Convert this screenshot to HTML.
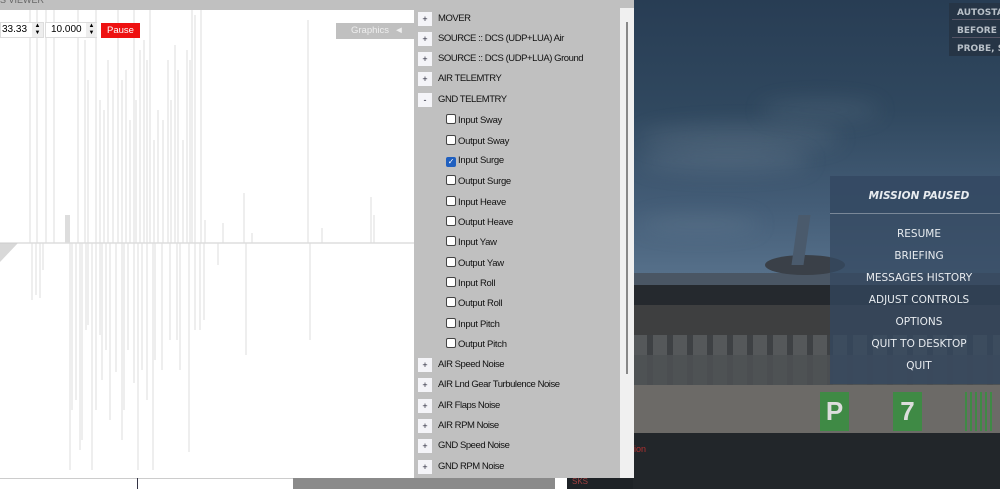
<!DOCTYPE html>
<html><head><meta charset="utf-8"><style>
*{margin:0;padding:0;box-sizing:border-box}
body{width:1000px;height:489px;overflow:hidden;position:relative;background:#1e2226;font-family:"Liberation Sans",sans-serif;}
.a{position:absolute}
.row{position:absolute;left:418px;font-size:9.5px;color:#111;height:14px;line-height:14px;letter-spacing:-0.45px}
.row .p{display:inline-block;width:14px;height:14px;background:#f4f4f8;color:#223;text-align:center;font-size:9px;margin-right:6px;vertical-align:top;letter-spacing:0}
.cb{position:absolute;left:446px;font-size:9.5px;color:#111;line-height:12px;letter-spacing:-0.3px}
.cb i{display:inline-block;width:10px;height:10px;border:1px solid #444;border-radius:2px;background:#fff;vertical-align:-1px;margin-right:2px}
.m{position:absolute;left:830px;width:178px;text-align:center;color:#e8ecf0;font-family:"DejaVu Sans",sans-serif;font-size:10.5px}
</style></head><body>
<!-- game area -->
<div class="a" style="left:633px;top:0;width:367px;height:275px;background:linear-gradient(180deg,#283d54 0%,#30485f 40%,#445d77 75%,#56708a 100%)"></div>
<div class="a" style="left:640px;top:125px;width:200px;height:26px;background:rgba(150,165,180,.18);filter:blur(10px);border-radius:50%"></div>
<div class="a" style="left:640px;top:150px;width:170px;height:22px;background:rgba(150,165,180,.2);filter:blur(10px);border-radius:50%"></div>
<div class="a" style="left:760px;top:100px;width:120px;height:20px;background:rgba(150,165,180,.15);filter:blur(10px);border-radius:50%"></div>
<div class="a" style="left:640px;top:215px;width:120px;height:18px;background:rgba(150,165,180,.15);filter:blur(10px);border-radius:50%"></div>
<div class="a" style="left:633px;top:273px;width:367px;height:12px;background:#4a5664"></div>
<div class="a" style="left:633px;top:285px;width:367px;height:20px;background:#25292e"></div>
<div class="a" style="left:633px;top:305px;width:367px;height:30px;background:#3e3f40"></div>
<div class="a" style="left:633px;top:335px;width:367px;height:50px;background:repeating-linear-gradient(90deg,#55585a 0 14px,#3e4144 14px 20px)"></div>
<div class="a" style="left:633px;top:355px;width:367px;height:30px;background:#4e5154;opacity:.85"></div>
<div class="a" style="left:633px;top:385px;width:367px;height:48px;background:#6c6a67"></div>
<div class="a" style="left:820px;top:392px;width:29px;height:39px;background:#3f8a45;color:#ddd;font:bold 26px 'Liberation Sans';text-align:center;line-height:39px">P</div>
<div class="a" style="left:893px;top:392px;width:29px;height:39px;background:#3f8a45;color:#ddd;font:bold 26px 'Liberation Sans';text-align:center;line-height:39px">7</div>
<div class="a" style="left:965px;top:392px;width:30px;height:39px;background:repeating-linear-gradient(90deg,#3f8a45 0 2px,#6c6a67 2px 5px)"></div>
<div class="a" style="left:633px;top:433px;width:367px;height:56px;background:#22262a"></div>
<div class="a" style="left:765px;top:255px;width:80px;height:20px;background:#3a4048;border-radius:50%"></div>
<div class="a" style="left:795px;top:215px;width:12px;height:50px;background:#4a5a6c;transform:skewX(-8deg)"></div>
<div class="a" style="left:634px;top:444px;color:#b03030;font-size:9px">ion</div>
<div class="a" style="left:572px;top:477px;color:#a04040;font-size:8px">SKS</div>
<!-- top-right box -->
<div class="a" style="left:949px;top:3px;width:51px;height:53px;background:#263546"></div>
<div class="a" style="left:957px;top:4px;color:#b8c0c8;font:bold 9px 'DejaVu Sans';line-height:18px;white-space:nowrap">AUTOSTA<br>BEFORE T<br>PROBE, S</div>
<div class="a" style="left:952px;top:19px;width:48px;height:1px;background:#556"></div>
<div class="a" style="left:952px;top:37px;width:48px;height:1px;background:#556"></div>
<!-- menu -->
<div class="a" style="left:830px;top:176px;width:170px;height:208px;background:rgba(52,72,96,.75)"></div>
<div class="a" style="left:830px;top:176px;width:170px;height:38px;background:rgba(52,74,100,.7);border-bottom:1px solid #7a8898"></div>
<div class="m" style="top:190px;font-weight:bold;font-style:italic;font-size:10.5px">MISSION PAUSED</div>
<div class="m" style="top:228px">RESUME</div>
<div class="m" style="top:250px">BRIEFING</div>
<div class="m" style="top:272px">MESSAGES HISTORY</div>
<div class="m" style="top:294px">ADJUST CONTROLS</div>
<div class="m" style="top:316px">OPTIONS</div>
<div class="m" style="top:338px">QUIT TO DESKTOP</div>
<div class="m" style="top:360px">QUIT</div>
<!-- left window -->
<div class="a" style="left:0;top:0;width:634px;height:10px;background:#c0c0c0;overflow:hidden"><span style="position:absolute;left:0;top:-5px;font-size:9px;color:#666">S VIEWER</span></div>
<div class="a" style="left:0;top:10px;width:414px;height:468px;background:#fff"></div>
<svg class="a" style="left:0;top:10px" width="414" height="468" stroke="#dcdcdc" stroke-width="1">
<polygon points="0,233 18,233 0,252" fill="#d8d8d8" stroke="none"/>
<line x1="0" y1="233" x2="414" y2="233" stroke="#ccc"/>
<rect x="65" y="205" width="5" height="28" fill="#ddd" stroke="none"/>
<g>
<line x1="30" y1="0" x2="30" y2="233"/><line x1="37" y1="0" x2="37" y2="233"/><line x1="46" y1="0" x2="46" y2="233"/><line x1="54" y1="0" x2="54" y2="233"/>
<line x1="78" y1="0" x2="78" y2="233"/><line x1="85" y1="30" x2="85" y2="233"/><line x1="88" y1="70" x2="88" y2="233"/><line x1="96" y1="0" x2="96" y2="233"/>
<line x1="100" y1="90" x2="100" y2="233"/><line x1="104" y1="100" x2="104" y2="233"/><line x1="108" y1="50" x2="108" y2="233"/><line x1="113" y1="80" x2="113" y2="233"/>
<line x1="118" y1="0" x2="118" y2="233"/><line x1="122" y1="70" x2="122" y2="233"/><line x1="126" y1="60" x2="126" y2="233"/><line x1="130" y1="110" x2="130" y2="233"/>
<line x1="134" y1="0" x2="134" y2="233"/><line x1="136" y1="90" x2="136" y2="233"/><line x1="140" y1="40" x2="140" y2="233"/><line x1="144" y1="30" x2="144" y2="233"/>
<line x1="147" y1="50" x2="147" y2="233"/><line x1="150" y1="0" x2="150" y2="233"/><line x1="154" y1="130" x2="154" y2="233"/><line x1="158" y1="100" x2="158" y2="233"/>
<line x1="163" y1="110" x2="163" y2="233"/><line x1="168" y1="50" x2="168" y2="233"/><line x1="171" y1="90" x2="171" y2="233"/><line x1="175" y1="35" x2="175" y2="233"/>
<line x1="178" y1="60" x2="178" y2="233"/><line x1="183" y1="130" x2="183" y2="233"/><line x1="187" y1="40" x2="187" y2="233"/><line x1="190" y1="50" x2="190" y2="233"/>
<line x1="192" y1="0" x2="192" y2="233"/><line x1="195" y1="5" x2="195" y2="233"/><line x1="201" y1="0" x2="201" y2="233"/><line x1="205" y1="210" x2="205" y2="233"/>
<line x1="32" y1="233" x2="32" y2="290"/><line x1="36" y1="233" x2="36" y2="285"/><line x1="40" y1="233" x2="40" y2="288"/><line x1="43" y1="233" x2="43" y2="260"/>
<line x1="70" y1="233" x2="70" y2="460"/><line x1="72" y1="233" x2="72" y2="400"/><line x1="76" y1="233" x2="76" y2="390"/><line x1="80" y1="233" x2="80" y2="440"/>
<line x1="82" y1="233" x2="82" y2="430"/><line x1="86" y1="233" x2="86" y2="320"/><line x1="88" y1="233" x2="88" y2="315"/><line x1="92" y1="233" x2="92" y2="460"/>
<line x1="96" y1="233" x2="96" y2="400"/><line x1="100" y1="233" x2="100" y2="325"/><line x1="102" y1="233" x2="102" y2="370"/><line x1="106" y1="233" x2="106" y2="340"/>
<line x1="110" y1="233" x2="110" y2="410"/><line x1="116" y1="233" x2="116" y2="362"/><line x1="122" y1="233" x2="122" y2="430"/><line x1="124" y1="233" x2="124" y2="400"/>
<line x1="128" y1="233" x2="128" y2="340"/><line x1="134" y1="233" x2="134" y2="373"/><line x1="138" y1="233" x2="138" y2="460"/><line x1="142" y1="233" x2="142" y2="360"/>
<line x1="147" y1="233" x2="147" y2="390"/><line x1="153" y1="233" x2="153" y2="460"/><line x1="155" y1="233" x2="155" y2="350"/><line x1="162" y1="233" x2="162" y2="360"/>
<line x1="170" y1="233" x2="170" y2="330"/><line x1="177" y1="233" x2="177" y2="330"/><line x1="180" y1="233" x2="180" y2="360"/><line x1="189" y1="233" x2="189" y2="442"/>
<line x1="195" y1="233" x2="195" y2="320"/><line x1="200" y1="233" x2="200" y2="320"/><line x1="204" y1="233" x2="204" y2="310"/>
<line x1="218" y1="233" x2="218" y2="255"/><line x1="246" y1="233" x2="246" y2="345"/><line x1="310" y1="233" x2="310" y2="330"/>
<line x1="244" y1="183" x2="244" y2="233"/><line x1="308" y1="10" x2="308" y2="233"/><line x1="371" y1="187" x2="371" y2="233"/><line x1="374" y1="205" x2="374" y2="233"/>
<line x1="223" y1="213" x2="223" y2="233"/><line x1="252" y1="223" x2="252" y2="233"/><line x1="322" y1="218" x2="322" y2="233"/>
</g>
</svg>
<!-- controls -->
<div class="a" style="left:0;top:22px;width:44px;height:16px;background:#fff;border:1px solid #ddd;font-size:10px;line-height:14px;padding-left:1px">33.33</div>
<div class="a" style="left:32px;top:23px;width:11px;height:14px;background:#eee;font-size:6px;text-align:center;line-height:7px">▲<br>▼</div>
<div class="a" style="left:45px;top:22px;width:52px;height:16px;background:#fff;border:1px solid #ddd;font-size:10px;line-height:14px;padding-left:5px">10.000</div>
<div class="a" style="left:86px;top:23px;width:11px;height:14px;background:#eee;font-size:6px;text-align:center;line-height:7px">▲<br>▼</div>
<div class="a" style="left:101px;top:23px;width:39px;height:15px;background:#ee1111;color:#fff;font-size:9.5px;text-align:center;line-height:15px">Pause</div>
<div class="a" style="left:336px;top:23px;width:78px;height:16px;background:#c0c0c0;color:#eee;font-size:9.5px;line-height:16px;padding-left:15px">Graphics &nbsp;◄</div>
<!-- right panel -->
<div class="a" style="left:414px;top:8px;width:206px;height:470px;background:#c0c0c0"></div>
<div class="a" style="left:620px;top:8px;width:14px;height:470px;background:#f0f0f0"></div>
<div class="a" style="left:626px;top:22px;width:2px;height:352px;background:#888"></div>
<div class="row" style="top:12px"><span class="p">+</span>MOVER</div>
<div class="row" style="top:32px"><span class="p">+</span>SOURCE :: DCS (UDP+LUA) Air</div>
<div class="row" style="top:52px"><span class="p">+</span>SOURCE :: DCS (UDP+LUA) Ground</div>
<div class="row" style="top:72px"><span class="p">+</span>AIR TELEMTRY</div>
<div class="row" style="top:93px"><span class="p">-</span>GND TELEMTRY</div>
<div class="cb" style="top:114px"><i></i>Input Sway</div>
<div class="cb" style="top:135px"><i></i>Output Sway</div>
<div class="cb" style="top:155px"><i style="background:#1f5fbf;border-color:#1f5fbf;color:#fff;font-size:8px;line-height:8px;text-align:center;font-style:normal">✓</i>Input Surge</div>
<div class="cb" style="top:175px"><i></i>Output Surge</div>
<div class="cb" style="top:196px"><i></i>Input Heave</div>
<div class="cb" style="top:216px"><i></i>Output Heave</div>
<div class="cb" style="top:236px"><i></i>Input Yaw</div>
<div class="cb" style="top:257px"><i></i>Output Yaw</div>
<div class="cb" style="top:277px"><i></i>Input Roll</div>
<div class="cb" style="top:297px"><i></i>Output Roll</div>
<div class="cb" style="top:318px"><i></i>Input Pitch</div>
<div class="cb" style="top:338px"><i></i>Output Pitch</div>
<div class="row" style="top:358px"><span class="p">+</span>AIR Speed Noise</div>
<div class="row" style="top:378px"><span class="p">+</span>AIR Lnd Gear Turbulence Noise</div>
<div class="row" style="top:399px"><span class="p">+</span>AIR Flaps Noise</div>
<div class="row" style="top:419px"><span class="p">+</span>AIR RPM Noise</div>
<div class="row" style="top:439px"><span class="p">+</span>GND Speed Noise</div>
<div class="row" style="top:460px"><span class="p">+</span>GND RPM Noise</div>
<!-- bottom strip -->
<div class="a" style="left:0;top:478px;width:293px;height:11px;background:#fff;border-top:1px solid #ccc"></div>
<div class="a" style="left:137px;top:478px;width:1px;height:11px;background:#334"></div>
<div class="a" style="left:293px;top:478px;width:262px;height:11px;background:#8a8a8a"></div>
<div class="a" style="left:555px;top:478px;width:12px;height:11px;background:#fff"></div>
</body></html>
